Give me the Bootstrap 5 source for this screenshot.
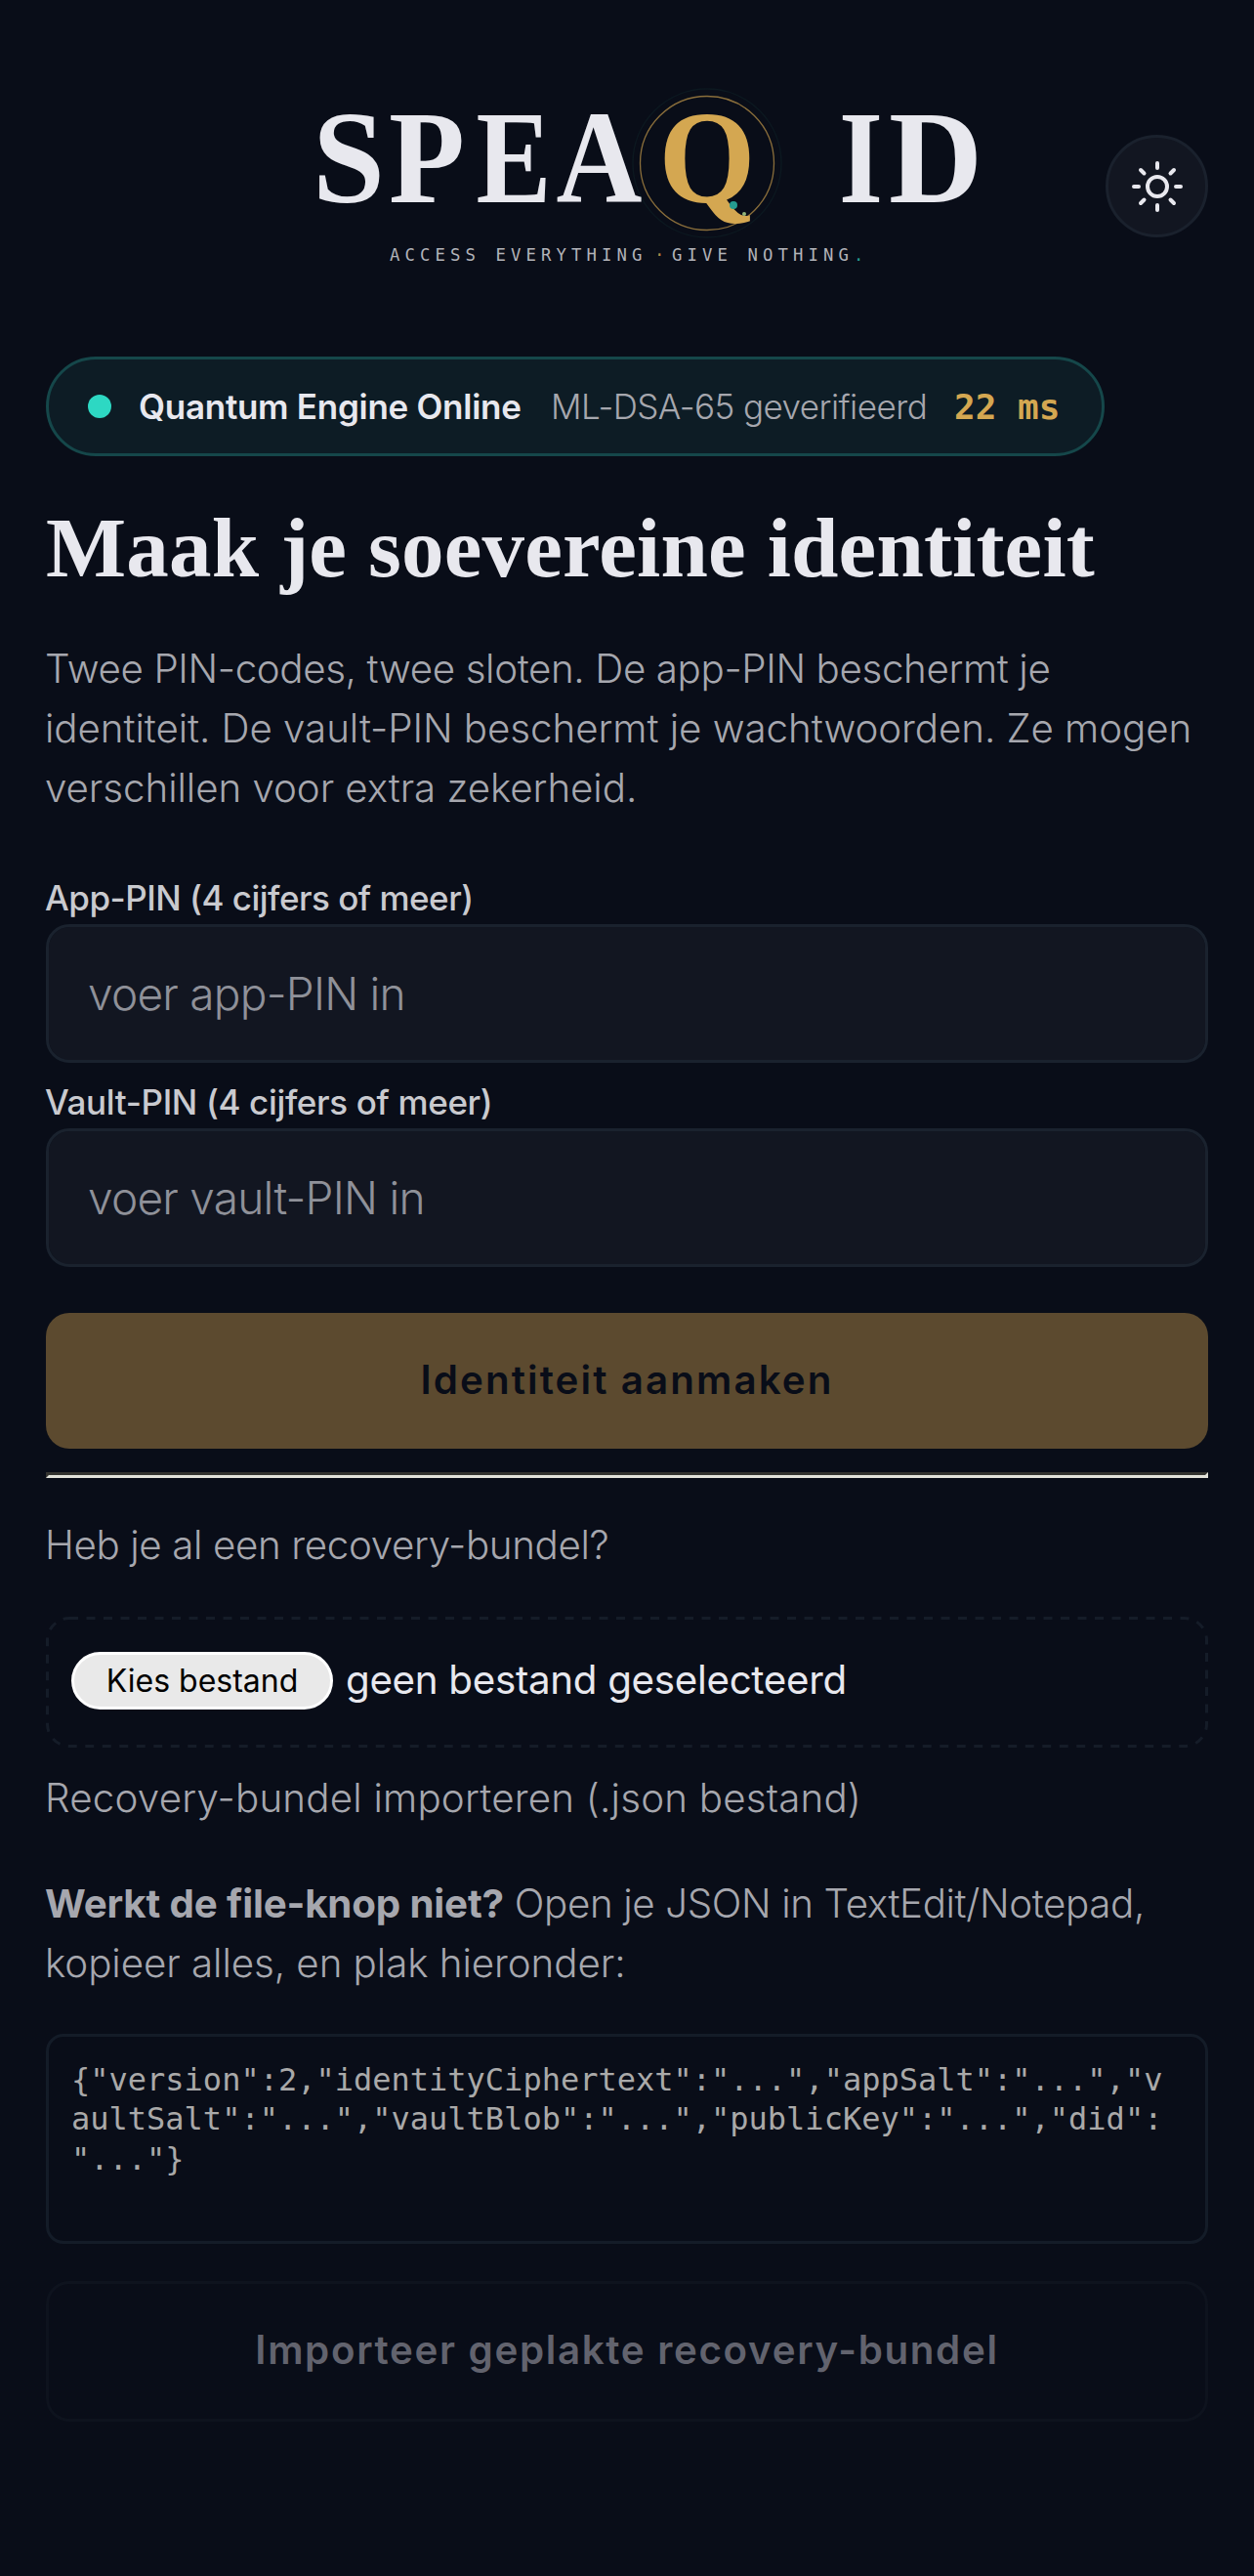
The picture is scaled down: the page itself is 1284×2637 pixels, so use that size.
<!DOCTYPE html>
<html lang="nl">
<head>
  <meta charset="UTF-8" />
  <meta name="viewport" content="width=device-width, initial-scale=1.0"/>
  <title>SPEAQ ID</title>
  <link href="https://cdn.jsdelivr.net/npm/bootstrap@5.3.3/dist/css/bootstrap.min.css" rel="stylesheet" />
  <style>
    body {
      background-color: #090d18;
      color: #a6a7ae;
      font-family: Inter, sans-serif;
      font-size: 40.3px;
      font-weight: 300;
      line-height: 61px;
    }

    .page {
      padding: 90px 47px 0;
    }

    .page-head {
      display: grid;
      grid-template-columns: 105px 1fr 105px;
      height: 190px;
      margin-bottom: 85px;
    }

    .logo {
      grid-column: 2;
      justify-self: center;
      overflow: visible;
    }

    .logo-name {
      font: 700 136px "Liberation Serif", serif;
      fill: #e8e8ee;
      text-anchor: middle;
    }

    .logo-tag {
      font: 400 17.3px "DejaVu Sans Mono", monospace;
      letter-spacing: 5.1px;
      fill: #b2b3b9;
    }

    .theme-btn {
      width: 105px;
      height: 105px;
      margin-top: 48px;
      background-color: #121621;
      border: 3px solid #1a212d;
    }

    .status-pill {
      width: 1084px;
      height: 102px;
      padding: 0 40px;
      border: 3px solid #15474a;
      background-color: #0d1c25;
      font-size: 35px;
    }

    .status-dot {
      width: 24px;
      height: 24px;
      margin-right: 28px;
      background-color: #2dd8c3;
    }

    .status-name {
      width: 422px;
      color: #e8e8ee;
      font-weight: 600;
      letter-spacing: -0.28px;
    }

    .status-algo {
      width: 413px;
      letter-spacing: -0.55px;
    }

    .status-time {
      color: #d4a751;
      font: 700 36px "DejaVu Sans Mono", monospace;
    }

    .page-title {
      margin: 44px 0 42.5px;
      color: #e8e8ee;
      font: 700 87px/100px "Liberation Serif", serif;
      letter-spacing: 0.18px;
    }

    .text-line {
      display: block;
      margin-left: -1px;
      white-space: nowrap;
    }

    .tight { letter-spacing: -0.37px; }
    .tight-sm { letter-spacing: -0.06px; }
    .loose-sm { letter-spacing: 0.2px; }

    .pin-label {
      display: block;
      margin: 56px 0 0 -1px;
      color: #c9cacf;
      font-size: 35px;
      font-weight: 500;
      line-height: 53px;
      letter-spacing: -0.5px;
    }

    .pin-input + .pin-label {
      margin-top: 14px;
      letter-spacing: -0.35px;
    }

    .pin-input,
    .pin-input:focus {
      height: 142px;
      padding: 0 40px;
      background-color: #121621;
      border: 3px solid #1a222e;
      border-radius: 24px;
      font-size: 46px;
      font-weight: 300;
      letter-spacing: -0.75px;
    }

    .pin-input::placeholder {
      color: #8f9199;
      opacity: 1;
    }

    .action-btn {
      border-radius: 24px;
      font-size: 40.3px;
      font-weight: 600;
      letter-spacing: 1.67px;
    }

    .action-btn:disabled {
      opacity: 1;
    }

    .create-btn:disabled {
      height: 139px;
      margin-top: 47px;
      padding-bottom: 6px;
      background-color: #5c4a2f;
      border: 0;
      color: #090d18;
      letter-spacing: 2.1px;
    }

    .import-btn:disabled {
      height: 144px;
      margin-top: 38px;
      background-color: transparent;
      border: 3px solid #0e131e;
      color: #62636e;
    }

    .divider {
      margin-top: 24px;
      border: 3px solid;
      border-color: #33332f #e2e2da #e2e2da #33332f;
    }

    .recovery-ask { margin: 38.5px 0 42.5px -1px; }
    .recovery-note { margin: 21px 0 47px -1px; }
    .paste-note { margin: 0 0 42px; }

    .paste-note b {
      font-weight: 700;
      letter-spacing: -0.17px;
    }

    .file-box {
      height: 134px;
      padding: 0 26px 2px;
      color: #e8e8ee;
      font-weight: 400;
      letter-spacing: -0.3px;
    }

    .file-btn {
      width: 268px;
      height: 59px;
      margin-right: 13px;
      background-color: #e9e9e9;
      border: 3px solid #fff;
      color: #000;
      font-size: 32px;
      line-height: 50px;
      letter-spacing: 0;
    }

    .file-name {
      margin-top: -3px;
    }

    .bundle-text,
    .bundle-text:focus {
      height: 215px;
      padding: 24px 36px 0 23px;
      background-color: transparent;
      border: 3px solid #141c28;
      border-radius: 18px;
      font: 400 32px/40.8px "DejaVu Sans Mono", monospace;
      resize: none;
      word-break: break-all;
      overflow: hidden;
    }

    .bundle-text::placeholder {
      color: #a9a9a9;
      opacity: 1;
      line-break: anywhere;
    }
  </style>
</head>
<body>
  <div class="page d-flex flex-column">
    <!-- Header -->
    <header class="page-head">
      <svg class="logo" width="800" height="190" viewBox="242 90 800 190">
        <circle cx="724" cy="167" r="76" fill="none" stroke="#0c1820" stroke-width="1.5"/>
        <circle cx="724" cy="167" r="68.5" fill="none" stroke="#8a6e3b" stroke-width="1.3"/>
        <g class="logo-name">
          <text x="357" y="206.7" textLength="74" lengthAdjust="spacingAndGlyphs">S</text>
          <text x="437" y="206.7" textLength="78" lengthAdjust="spacingAndGlyphs">P</text>
          <text x="526" y="206.7" textLength="77" lengthAdjust="spacingAndGlyphs">E</text>
          <text x="613.5" y="206.7" textLength="88" lengthAdjust="spacingAndGlyphs">A</text>
          <text x="724" y="206.7" textLength="99" lengthAdjust="spacingAndGlyphs" fill="#d4a751">Q</text>
          <text x="881.5" y="206.7" textLength="45" lengthAdjust="spacingAndGlyphs">I</text>
          <text x="958" y="206.7" textLength="96" lengthAdjust="spacingAndGlyphs">D</text>
        </g>
        <circle cx="751" cy="210" r="4" fill="#259c90"/>
        <circle cx="762" cy="219" r="2" fill="#93b47a"/>
        <g class="logo-tag">
          <text x="399" y="267">ACCESS EVERYTHING</text>
          <text x="670" y="267" fill="#b08a45">·</text>
          <text x="688" y="267">GIVE NOTHING<tspan fill="#259c90">.</tspan></text>
        </g>
      </svg>
      <button type="button" class="theme-btn btn rounded-circle p-0 d-flex align-items-center justify-content-center">
        <svg width="56" height="56" viewBox="-28 -28 56 56" fill="none" stroke="#e8e8ee" stroke-width="4" stroke-linecap="round">
          <circle r="10"/>
          <path d="M0-24v5M0 19v5M-24 0h5M19 0h5M-17-17l3.500 3.500M13.500 13.500l3.500 3.500M17-17l-3.500 3.500M-13.500 13.500l-3.500 3.500"/>
        </svg>
      </button>
    </header>

    <!-- Engine status -->
    <div class="status-pill d-flex align-items-center rounded-pill text-nowrap">
      <span class="status-dot rounded-circle"></span>
      <span class="status-name">Quantum Engine Online</span>
      <span class="status-algo">ML-DSA-65 geverifieerd</span>
      <span class="status-time">22 ms</span>
    </div>

    <h1 class="page-title text-nowrap">Maak je soevereine identiteit</h1>
    <p class="mb-0">
      <span class="text-line tight">Twee PIN-codes, twee sloten. De app-PIN beschermt je</span>
      <span class="text-line tight-sm">identiteit. De vault-PIN beschermt je wachtwoorden. Ze mogen</span>
      <span class="text-line tight-sm">verschillen voor extra zekerheid.</span>
    </p>

    <!-- PIN form -->
    <form class="d-flex flex-column" id="pinForm">
      <label class="pin-label" for="appPin">App-PIN (4 cijfers of meer)</label>
      <input type="password" class="pin-input form-control" id="appPin" placeholder="voer app-PIN in" />
      <label class="pin-label" for="vaultPin">Vault-PIN (4 cijfers of meer)</label>
      <input type="password" class="pin-input form-control" id="vaultPin" placeholder="voer vault-PIN in" />
      <button type="submit" class="action-btn create-btn btn w-100" disabled>Identiteit aanmaken</button>
    </form>

    <div class="divider"></div>

    <!-- Recovery bundle -->
    <p class="recovery-ask tight">Heb je al een recovery-bundel?</p>
    <div class="file-box position-relative d-flex align-items-center text-nowrap">
      <svg class="position-absolute top-0 start-0" width="1190" height="134" fill="none">
        <rect x="1.5" y="1.5" width="1187" height="131" rx="22.5" stroke="#151c28" stroke-width="3" stroke-dasharray="9 8.5"/>
      </svg>
      <button type="button" class="file-btn btn rounded-pill p-0">Kies bestand</button>
      <span class="file-name">geen bestand geselecteerd</span>
    </div>
    <p class="recovery-note loose-sm">Recovery-bundel importeren (.json bestand)</p>
    <p class="paste-note">
      <span class="text-line tight"><b>Werkt de file-knop niet?</b> Open je JSON in TextEdit/Notepad,</span>
      <span class="text-line tight-sm">kopieer alles, en plak hieronder:</span>
    </p>
    <textarea class="bundle-text form-control" placeholder='{"version":2,"identityCiphertext":"...","appSalt":"...","vaultSalt":"...","vaultBlob":"...","publicKey":"...","did":"..."}'></textarea>
    <button type="button" class="action-btn import-btn btn w-100" disabled>Importeer geplakte recovery-bundel</button>
  </div>

  <script src="https://cdn.jsdelivr.net/npm/bootstrap@5.3.3/dist/js/bootstrap.bundle.min.js"></script>
</body>
</html>
